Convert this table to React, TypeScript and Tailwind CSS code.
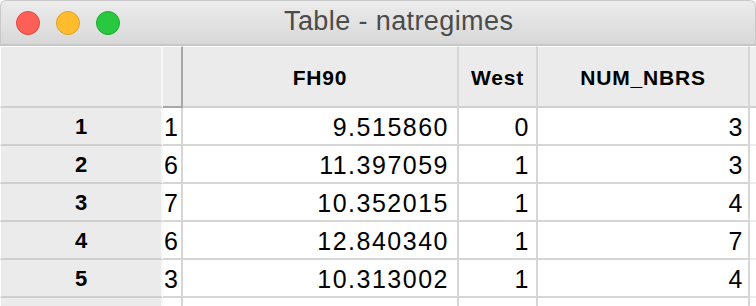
import React from "react";

const rows = [
  ["1", "1", "9.515860", "0", "3"],
  ["2", "6", "11.397059", "1", "3"],
  ["3", "7", "10.352015", "1", "4"],
  ["4", "6", "12.840340", "1", "7"],
  ["5", "3", "10.313002", "1", "4"],
];

function Light({ bg, border }: { bg: string; border: string }) {
  return <span className={`block w-[24px] h-[24px] rounded-full border ${bg} ${border}`} />;
}

export default function App() {
  return (
    <div className="w-[756px] h-[306px] overflow-hidden bg-white" style={{ fontFamily: '"Liberation Sans", Arial, sans-serif' }}>
      <div className="h-[46px] flex items-center relative rounded-t-[6px] border-t border-x border-[#c9c9c9] border-b-2 border-b-[#c6c6c6] bg-gradient-to-b from-[#ececec] to-[#d8d8d8]">
        <div className="flex gap-[16px] pl-[15px]">
          <Light bg="bg-[#fe5f57]" border="border-[#e2463f]" />
          <Light bg="bg-[#febc2e]" border="border-[#dfa023]" />
          <Light bg="bg-[#28c840]" border="border-[#1daa2c]" />
        </div>
        <div className="pl-[164px] text-[27px] tracking-[0.4px] text-[#4b4b4b] leading-none pb-[2px]">Table - natregimes</div>
      </div>
      <div className="grid grid-cols-[163px_20px_276px_79px_212px_1fr] grid-rows-[62px_38px_38px_38px_38px_38px_38px]">
        <div className="bg-[#ebebeb] border-t border-l border-t-white border-l-white border-r-2 border-r-[#f7f7f7] border-b-2 border-b-[#d0d0d0]" />
        <div className="bg-[#ebebeb] border-t border-t-white border-r-2 border-r-[#a8a8a8] border-b-2 border-b-[#a8a8a8]" />
        {["FH90", "West", "NUM_NBRS"].map((h) => (
          <div key={h} className="bg-[#ebebeb] border-t border-t-white border-r-2 border-r-[#d6d6d6] border-b-2 border-b-[#d0d0d0] flex items-center justify-center text-[21px] font-bold tracking-[0.8px] text-black pt-[2px]">
            {h}
          </div>
        ))}
        <div className="bg-[#efefef] border-t border-t-white border-b-2 border-b-[#d0d0d0]" />
        {rows.map((r) => (
          <React.Fragment key={r[0]}>
            <div className="bg-[#ebebeb] border-l border-l-white border-r-2 border-r-[#f7f7f7] border-b-2 border-b-[#cfcfcf] flex items-center justify-center font-bold text-black pt-[2px]">
              <span className="text-[22px] leading-none">{r[0]}</span>
            </div>
            <div className="bg-white border-r-2 border-r-[#d6d6d6] border-b-2 border-b-[#d6d6d6] overflow-hidden flex items-center text-[25px] tracking-[1.5px] text-black pt-[3px] pl-[1px] whitespace-nowrap">
              {r[1]}
            </div>
            <div className="bg-white border-r-2 border-r-[#d6d6d6] border-b-2 border-b-[#d6d6d6] flex items-center justify-end text-[25px] tracking-[1.5px] text-black pt-[3px] pr-[8px]">
              {r[2]}
            </div>
            <div className="bg-white border-r-2 border-r-[#d6d6d6] border-b-2 border-b-[#d6d6d6] flex items-center justify-end text-[25px] tracking-[1.5px] text-black pt-[3px] pr-[6px]">
              {r[3]}
            </div>
            <div className="bg-white border-r-2 border-r-[#d6d6d6] border-b-2 border-b-[#d6d6d6] flex items-center justify-end text-[25px] tracking-[1.5px] text-black pt-[3px] pr-[4px]">
              {r[4]}
            </div>
            <div className="bg-white border-b-2 border-b-[#ececec]" />
          </React.Fragment>
        ))}
        <div className="bg-[#ebebeb] border-l border-l-white border-r-2 border-r-[#f7f7f7]" />
        <div className="bg-white border-r-2 border-r-[#d6d6d6]" />
        <div className="bg-white border-r-2 border-r-[#d6d6d6]" />
        <div className="bg-white border-r-2 border-r-[#d6d6d6]" />
        <div className="bg-white border-r-2 border-r-[#d6d6d6]" />
        <div className="bg-white" />
      </div>
    </div>
  );
}
